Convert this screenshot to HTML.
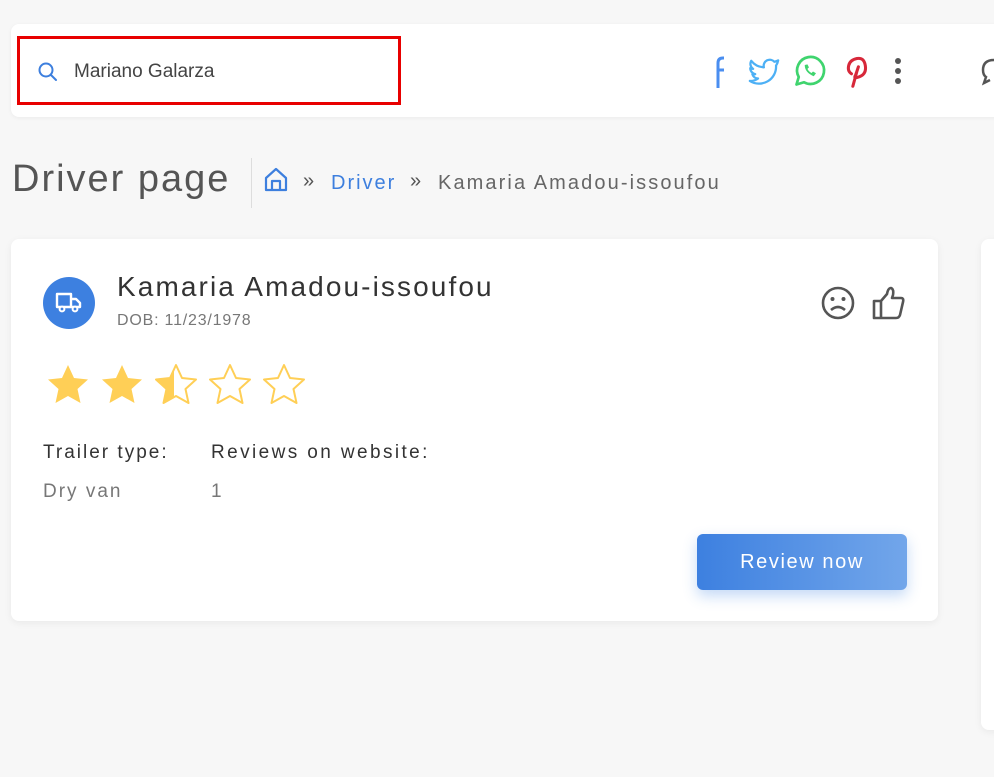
<!DOCTYPE html>
<html><head><style>
body{margin:0;width:994px;height:777px;background:#f7f7f7;font-family:"Liberation Sans",sans-serif;position:relative;overflow:hidden}
.a{position:absolute;white-space:nowrap}
</style></head><body>
<div class="a" style="left:11px;top:24px;width:1000px;height:93px;background:#fff;border-radius:8px;box-shadow:0 1px 4px rgba(0,0,0,.05)"></div>
<div class="a" style="left:17px;top:36px;width:378px;height:63px;border:3px solid #e80000"></div>
<svg class="a" style="left:37px;top:61px" width="22" height="22" viewBox="0 0 22 22"><circle cx="9" cy="9" r="6.5" fill="none" stroke="#3d7fde" stroke-width="2"/><path d="M14 14l5 5" stroke="#3d7fde" stroke-width="2" stroke-linecap="round"/></svg>
<div class="a" style="left:74px;top:61px;font-size:19px;color:#444">Mariano Galarza</div>
<svg class="a" style="left:712px;top:54px" width="16" height="36" viewBox="0 0 16 36"><path d="M6 34V16H12M6 16V9Q6 4 11 4H12" fill="none" stroke="#4a8ef0" stroke-width="3"/></svg>
<svg class="a" style="left:745px;top:54px" width="38" height="34" viewBox="0 0 24 24"><path d="M22 4.5a9 9 0 0 1-2.7 1 4.3 4.3 0 0 0-7.4 3.9A12 12 0 0 1 3 4.8a4.3 4.3 0 0 0 1.3 5.7 4.3 4.3 0 0 1-2-.5 4.3 4.3 0 0 0 3.5 4.2 4.3 4.3 0 0 1-2 .1 4.3 4.3 0 0 0 4 3A8.6 8.6 0 0 1 2 19a12 12 0 0 0 18.5-10.8A8.7 8.7 0 0 0 22 4.5z" fill="none" stroke="#4db0f5" stroke-width="1.6" stroke-linejoin="round"/></svg>
<svg class="a" style="left:792px;top:53px" width="36" height="36" viewBox="0 0 24 24"><path d="M3 21l1.5-5A9 9 0 1 1 8 19.5z" fill="none" stroke="#3fd46e" stroke-width="1.8" stroke-linejoin="round"/><path d="M8.5 8q0 5 6 7.5l1.5-2-2-1.2-1 1q-2-1-2.7-2.7l1-1-1-2z" fill="#3fd46e"/></svg>
<svg class="a" style="left:840px;top:53px" width="34" height="36" viewBox="0 0 24 26"><path d="M9 24l3-11M8 15Q5 13 6 9t6-5 6 5-4 8-3-1l2-6" fill="none" stroke="#d7283a" stroke-width="2.2" stroke-linecap="round"/></svg>
<div class="a" style="left:895px;top:58px;width:6px;height:6px;border-radius:3px;background:#555;box-shadow:0 10px #555,0 20px #555"></div>
<svg class="a" style="left:980px;top:55px" width="14" height="34" viewBox="0 0 14 34"><path d="M14 5Q3 5 3 15q0 5 3 7l-2 6 6-3" fill="none" stroke="#555" stroke-width="2.5"/></svg>

<div class="a" style="left:12px;top:158px;font-size:38px;color:#555;letter-spacing:2px">Driver page</div>
<div class="a" style="left:251px;top:158px;width:1px;height:50px;background:#ddd"></div>
<svg class="a" style="left:264px;top:167px" width="24" height="25" viewBox="0 0 24 25"><path d="M2 11L12 2l10 9v12H2zM8 23v-9h8v9" fill="none" stroke="#3d7fde" stroke-width="2.2" stroke-linejoin="round"/></svg>
<div class="a" style="left:303px;top:170px;font-size:20px;color:#555">»</div>
<div class="a" style="left:331px;top:172px;font-size:20px;color:#3d7fde;letter-spacing:2px">Driver</div>
<div class="a" style="left:410px;top:170px;font-size:20px;color:#555">»</div>
<div class="a" style="left:438px;top:172px;font-size:20px;color:#666;letter-spacing:2.1px">Kamaria Amadou-issoufou</div>

<div class="a" style="left:11px;top:239px;width:927px;height:382px;background:#fff;border-radius:8px;box-shadow:0 2px 8px rgba(0,0,0,.06)"></div>
<div class="a" style="left:981px;top:239px;width:30px;height:491px;background:#fff;border-radius:8px;box-shadow:0 2px 8px rgba(0,0,0,.06)"></div>
<div class="a" style="left:43px;top:277px;width:52px;height:52px;border-radius:50%;background:#3d80e0"></div>
<svg class="a" style="left:54px;top:290px" width="30" height="26" viewBox="0 0 30 26"><path d="M3 4h14v13H3zM17 9h5l4 4v4h-9" fill="none" stroke="#fff" stroke-width="2.4" stroke-linejoin="round"/><circle cx="8" cy="19" r="2.4" fill="#3d80e0" stroke="#fff" stroke-width="2"/><circle cx="21" cy="19" r="2.4" fill="#3d80e0" stroke="#fff" stroke-width="2"/></svg>
<div class="a" style="left:117px;top:271px;font-size:28px;color:#333;letter-spacing:2.1px">Kamaria Amadou-issoufou</div>
<div class="a" style="left:117px;top:312px;font-size:16px;color:#777;letter-spacing:0.8px">DOB: 11/23/1978</div>
<svg class="a" style="left:820px;top:285px" width="36" height="36" viewBox="0 0 36 36"><circle cx="18" cy="18" r="15" fill="none" stroke="#555" stroke-width="2.6"/><circle cx="12.5" cy="14" r="2" fill="#555"/><circle cx="23.5" cy="14" r="2" fill="#555"/><path d="M11 25q7-6 14 0" fill="none" stroke="#555" stroke-width="2.6"/></svg>
<svg class="a" style="left:871px;top:285px" width="36" height="36" viewBox="0 0 36 36"><path d="M3 16h7v17H3zM10 16l6-7q1-6 4-6 3 1 2 7l-1 3h9q3 0 2 4l-3 13q-1 3-4 3H10" fill="none" stroke="#555" stroke-width="2.6" stroke-linejoin="round"/></svg>
<svg class="a" style="left:44px;top:361px" width="270" height="50" viewBox="0 0 270 50">
<g fill="#ffcf56"><path d="M24 4l6 13 14 1.5-10.5 9.5 3 14L24 35 11.5 42l3-14L4 18.5 18 17z"/><path transform="translate(54 0)" d="M24 4l6 13 14 1.5-10.5 9.5 3 14L24 35 11.5 42l3-14L4 18.5 18 17z"/></g>
<g transform="translate(108 0)"><path d="M22 8.5L18 17 4 18.5 14.5 28l-3 14L22 36z" fill="#ffcf56"/><path d="M24 4l6 13 14 1.5-10.5 9.5 3 14L24 35 11.5 42l3-14L4 18.5 18 17z" fill="none" stroke="#ffcf56" stroke-width="2" stroke-linejoin="round"/></g>
<path transform="translate(162 0)" d="M24 4l6 13 14 1.5-10.5 9.5 3 14L24 35 11.5 42l3-14L4 18.5 18 17z" fill="none" stroke="#ffcf56" stroke-width="2" stroke-linejoin="round"/>
<path transform="translate(216 0)" d="M24 4l6 13 14 1.5-10.5 9.5 3 14L24 35 11.5 42l3-14L4 18.5 18 17z" fill="none" stroke="#ffcf56" stroke-width="2" stroke-linejoin="round"/></svg>
<div class="a" style="left:43px;top:442px;font-size:19px;color:#333;letter-spacing:2px">Trailer type:</div>
<div class="a" style="left:211px;top:442px;font-size:19px;color:#333;letter-spacing:2.4px">Reviews on website:</div>
<div class="a" style="left:43px;top:481px;font-size:19px;color:#777;letter-spacing:2px">Dry van</div>
<div class="a" style="left:211px;top:481px;font-size:19px;color:#777">1</div>
<div class="a" style="left:697px;top:534px;width:210px;height:56px;border-radius:6px;background:linear-gradient(90deg,#3d80e0,#72a6ea);box-shadow:0 6px 14px rgba(61,128,224,.3);color:#fff;font-size:20px;text-align:center;line-height:56px;letter-spacing:1.6px">Review now</div>
</body></html>
